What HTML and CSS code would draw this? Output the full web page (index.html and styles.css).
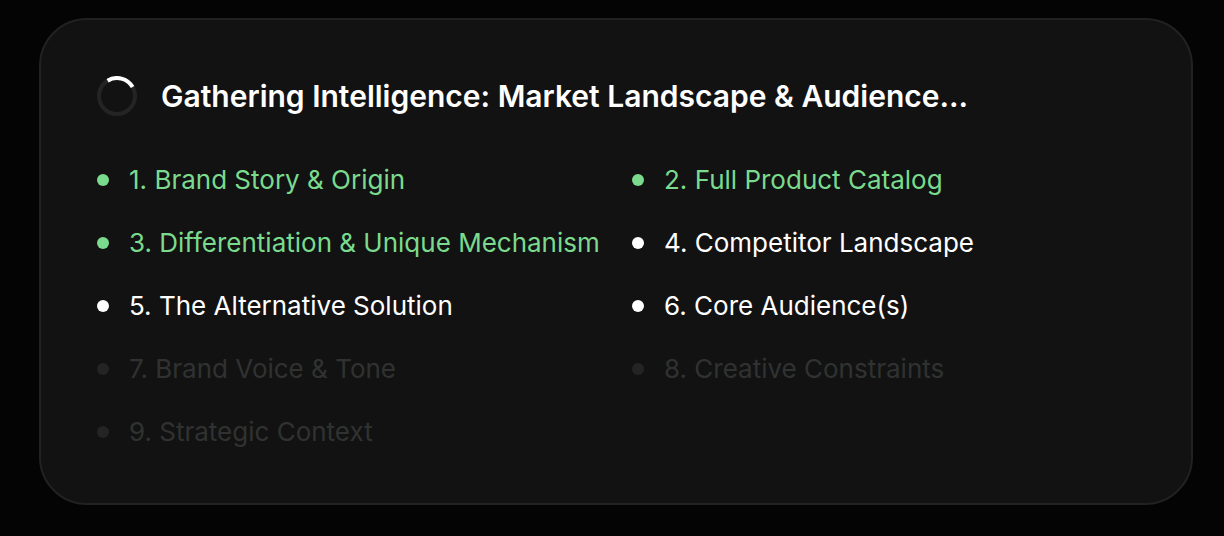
FILE: index.html
```html
<!DOCTYPE html>
<html lang="en">
<head>
  <meta charset="UTF-8">
  <title>Gathering Intelligence</title>
  <link rel="stylesheet" href="styles.css">
</head>
<body>
  <div class="status-card">
    <div class="status-header">
      <svg class="spinner" viewBox="0 0 40 40">
        <circle class="spinner-track" cx="20" cy="20" r="18"/>
        <path class="spinner-arc" d="M10.6 4.7A18 18 0 0 1 35.6 11"/>
      </svg>
      <h1 class="status-title">Gathering Intelligence: Market Landscape &amp; Audience...</h1>
    </div>

    <ul class="step-list">
      <li class="step done">1. Brand Story &amp; Origin</li>
      <li class="step done">2. Full Product Catalog</li>
      <li class="step done">3. Differentiation &amp; Unique Mechanism</li>
      <li class="step active">4. Competitor Landscape</li>
      <li class="step active">5. The Alternative Solution</li>
      <li class="step active">6. Core Audience(s)</li>
      <li class="step">7. Brand Voice &amp; Tone</li>
      <li class="step">8. Creative Constraints</li>
      <li class="step">9. Strategic Context</li>
    </ul>
  </div>
</body>
</html>
```
FILE: styles.css
```css
* {
  box-sizing: border-box;
}

body {
  font-family: Inter, sans-serif;
  background-color: #040404;
  margin: 0;
  padding: 18px 31px 31px 39px;
  height: 536px;
  overflow: hidden;
}

.status-card {
  height: 487px;
  background-color: #121212;
  border: 2px solid #222;
  border-radius: 48px;
  padding: 52px 56px;
}

.status-header {
  display: flex;
  align-items: center;
  gap: 24px;
  height: 48px;
  margin-bottom: 40px;
}

.spinner {
  width: 40px;
  height: 40px;
  flex-shrink: 0;
}

.spinner-track,
.spinner-arc {
  fill: none;
  stroke: #242424;
  stroke-width: 4;
}

.spinner-arc {
  stroke: #fff;
}

.status-title {
  color: #fff;
  font-size: 30px;
  font-weight: 600;
  line-height: 48px;
  margin: 0;
  white-space: nowrap;
}

.step-list {
  display: grid;
  grid-template-columns: 503px 503px;
  gap: 24px 32px;
  list-style: none;
  margin: 0;
  padding: 0;
}

.step {
  display: flex;
  align-items: center;
  gap: 20px;
  color: #303231;
  font-size: 26px;
  line-height: 39px;
  white-space: nowrap;
}

.step::before {
  content: "";
  width: 12px;
  height: 12px;
  flex-shrink: 0;
  border-radius: 50%;
  background-color: #242424;
}

.step.done {
  color: #7ada8d;
}

.step.active {
  color: #fff;
}

.step.done::before,
.step.active::before {
  background-color: currentColor;
}
```
